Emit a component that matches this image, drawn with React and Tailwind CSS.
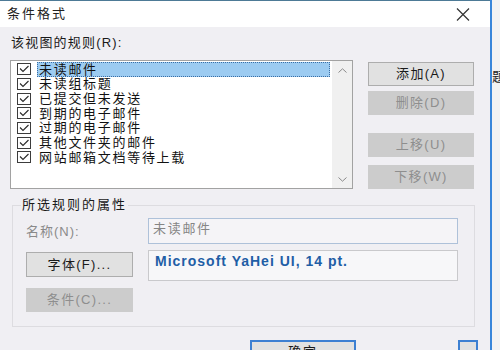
import React from "react";

const rules = [
  "未读邮件",
  "未读组标题",
  "已提交但未发送",
  "到期的电子邮件",
  "过期的电子邮件",
  "其他文件夹的邮件",
  "网站邮箱文档等待上载",
];

const font = { fontFamily: '"Liberation Sans", "Noto Sans CJK SC", sans-serif' };

function CheckBox() {
  return (
    <span className="flex h-[12px] w-[14px] shrink-0 items-center justify-center border border-[#3c3c3c] bg-white">
      <svg width="10" height="8" viewBox="0 0 10 8">
        <path d="M1 3.5 L4 6.5 L9.5 1" fill="none" stroke="#2a2a2a" strokeWidth="1.1" />
      </svg>
    </span>
  );
}

function Btn({ children, disabled, className }) {
  return (
    <div
      className={
        (disabled
          ? "bg-[#cccccc] text-[#8e8e8e] "
          : "border border-[#adadad] bg-[#e1e1e1] text-[#1a1a1a] ") +
        "flex items-center justify-center text-[13px] leading-[16px] tracking-[1.3px] " +
        className
      }
    >
      {children}
    </div>
  );
}

export default function App() {
  return (
    <div className="flex h-[350px] w-[500px] overflow-hidden bg-[#f0eff3]" style={font}>
      {/* dialog */}
      <div className="flex w-[490px] shrink-0 flex-col border-t border-[#4d7a96]">
        {/* title bar */}
        <div className="flex h-[26px] shrink-0 items-center justify-between bg-white pl-[7px] pr-[20px]">
          <span className="text-[13px] leading-[16px] tracking-[2px] text-[#222]">条件格式</span>
          <svg width="14" height="13" viewBox="0 0 14 13">
            <path d="M1 0.5 L13 12.5 M13 0.5 L1 12.5" stroke="#333" strokeWidth="1.2" />
          </svg>
        </div>

        <div className="flex flex-col pl-[10px]">
          <div className="mt-[8px] pl-[1px] text-[13px] leading-[16px] tracking-[1.2px] text-[#1a1a1a]">
            该视图的规则(R):
          </div>

          {/* list + buttons */}
          <div className="mt-[9px] flex">
            <div className="flex h-[129px] w-[343px] border border-[#a2a2a2] bg-white">
              <div className="flex flex-1 flex-col pt-[1px] pr-[2px]">
                {rules.map((r, i) => (
                  <div key={r} className="flex h-[14.67px] items-center pl-[6px]">
                    <CheckBox />
                    <span
                      className={
                        (i === 0
                          ? "flex-1 border border-dotted border-[#3a6ea5] bg-[#9ccbf1] "
                          : "border border-transparent ") +
                        "ml-[6px] pl-[1px] text-[13px] leading-[13px] tracking-[1.7px] text-[#111] whitespace-nowrap"
                      }
                    >
                      {r}
                    </span>
                  </div>
                ))}
              </div>
              <div className="flex w-[20px] flex-col items-center justify-between bg-[#f0f0f0] pt-[7px] pb-[6px]">
                <svg width="9" height="5" viewBox="0 0 9 5">
                  <path d="M0.5 4.5 L4.5 0.8 L8.5 4.5" fill="none" stroke="#8a8a8a" strokeWidth="1" />
                </svg>
                <svg width="9" height="5" viewBox="0 0 9 5">
                  <path d="M0.5 0.5 L4.5 4.2 L8.5 0.5" fill="none" stroke="#8a8a8a" strokeWidth="1" />
                </svg>
              </div>
            </div>

            <div className="ml-[15px] mt-[2px] flex w-[106px] flex-col">
              <Btn className="h-[24px]">添加(A)</Btn>
              <Btn disabled className="mt-[5px] h-[24px]">删除(D)</Btn>
              <Btn disabled className="mt-[18px] h-[24px]">上移(U)</Btn>
              <Btn disabled className="mt-[8px] h-[24px]">下移(W)</Btn>
            </div>
          </div>

          {/* properties group */}
          <fieldset className="ml-[2px] mt-[8px] h-[130px] w-[463px] border border-[#dddce0]">
            <legend className="ml-[8px] px-[1px] text-[13px] leading-[16px] tracking-[2px] text-[#1a1a1a]">
              所选规则的属性
            </legend>
            <div className="flex">
              <div className="ml-[13px] flex w-[107px] flex-col">
                <div className="mt-[11px] text-[13px] leading-[16px] tracking-[1px] text-[#8a8a8a]">
                  名称(N):
                </div>
                <Btn className="mt-[12px] h-[25px]">字体(F)...</Btn>
                <Btn disabled className="mt-[11px] h-[24px]">条件(C)...</Btn>
              </div>
              <div className="ml-[15px] flex w-[310px] flex-col">
                <div className="mt-[5px] h-[26px] border border-[#aec1d9] bg-[#f5f4f7] pl-[4px] pt-[2px] text-[13px] leading-[16px] tracking-[1.7px] text-[#858585]">
                  未读邮件
                </div>
                <div className="mt-[6px] h-[31px] border border-[#c9c9cc] bg-[#f7f7f9] pl-[6px] pt-[2px] text-[14px] font-bold leading-[16px] tracking-[1px] text-[#1f5ea6]">
                  Microsoft YaHei UI, 14 pt.
                </div>
              </div>
            </div>
          </fieldset>

          {/* bottom buttons */}
          <div className="mt-[13px] flex">
            <div className="ml-[240px] flex h-[24px] w-[106px] items-center justify-center border-2 border-[#3d80d2] bg-[#e1e1e1] text-[13px] leading-[16px] tracking-[2px] text-[#1a1a1a]">
              确定
            </div>
            <div className="ml-[102px] h-[24px] w-[20px] border-2 border-[#3d80d2] bg-[#e1e1e1]" />
          </div>
        </div>
      </div>

      {/* window edge and what lies behind */}
      <div className="w-[2px] shrink-0 bg-[#3a87da]" />
      <div className="w-[8px] shrink-0 overflow-hidden bg-[#f3f3f3] pt-[64px]">
        <span className="whitespace-nowrap text-[13px] leading-[16px] text-[#222]">题</span>
      </div>
    </div>
  );
}
